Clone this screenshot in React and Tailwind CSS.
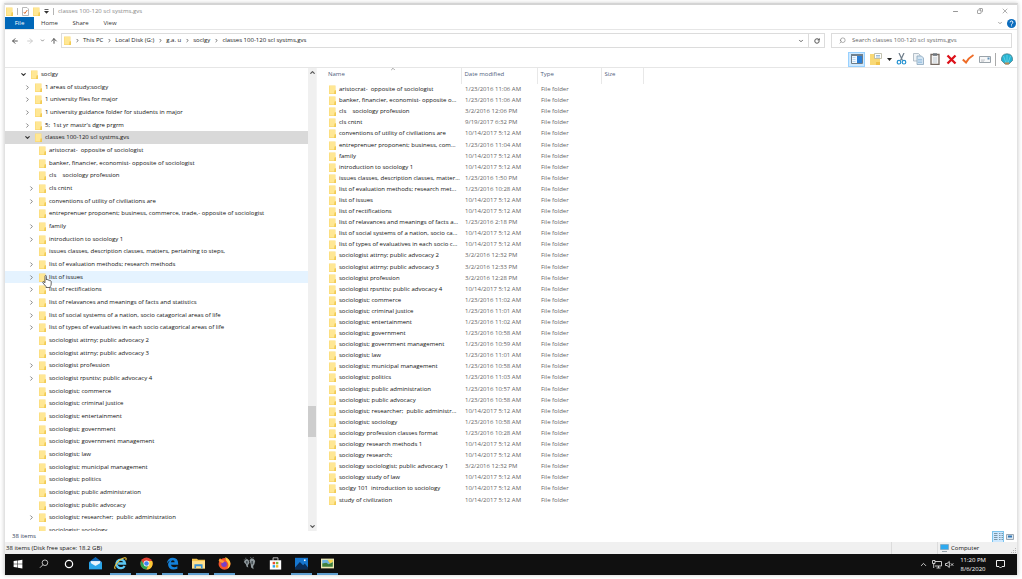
import { ArrowLeft, ArrowRight, ArrowUp, ChevronDown, ChevronRight, ChevronUp, Copy, Minus, RotateCcw, Search, X } from 'lucide-react'

const CRUMBS = ['This PC', 'Local Disk (G:)', 'g.a. u', 'soclgy', 'classes 100-120 scl systms,gvs']

// level, arrow (0 none, 1 closed, 2 open), name
const TREE = [
  [0, 2, 'soclgy'],
  [1, 1, '1 areas of study;soclgy'],
  [1, 1, '1 university files for major'],
  [1, 1, '1 university guidance folder for students in major'],
  [1, 1, '5;  1st yr mastr\'s dgre prgrm'],
  [1, 2, 'classes 100-120 scl systms,gvs'],
  [2, 0, 'aristocrat-  opposite of sociologist'],
  [2, 0, 'banker, financier, economist- opposite of sociologist'],
  [2, 0, 'cls    sociology profession'],
  [2, 1, 'cls cntnt'],
  [2, 1, 'conventions of utility of civiliations are'],
  [2, 0, 'entreprenuer proponent; business, commerce, trade,- opposite of sociologist'],
  [2, 1, 'family'],
  [2, 1, 'introduction to sociology 1'],
  [2, 0, 'issues classes, description classes, matters, pertaining to steps,'],
  [2, 1, 'list of evaluation methods; research methods'],
  [2, 1, 'list of issues'],
  [2, 1, 'list of rectifications'],
  [2, 1, 'list of relavances and meanings of facts and statistics'],
  [2, 1, 'list of social systems of a nation, socio catagorical areas of life'],
  [2, 1, 'list of types of evaluatives in each socio catagorical areas of life'],
  [2, 0, 'sociologist attrny; public advocacy 2'],
  [2, 0, 'sociologist attrny; public advocacy 3'],
  [2, 1, 'sociologist profession'],
  [2, 1, 'sociologist rpsnttv; public advocacy 4'],
  [2, 0, 'sociologist; commerce'],
  [2, 0, 'sociologist; criminal justice'],
  [2, 0, 'sociologist; entertainment'],
  [2, 0, 'sociologist; government'],
  [2, 0, 'sociologist; government management'],
  [2, 0, 'sociologist; law'],
  [2, 0, 'sociologist; municipal management'],
  [2, 0, 'sociologist; politics'],
  [2, 0, 'sociologist; public administration'],
  [2, 0, 'sociologist; public advocacy'],
  [2, 1, 'sociologist; researcher;  public administration'],
  [2, 0, 'sociologist; sociology'],
]

const FILES = [
  ['aristocrat-  opposite of sociologist', '1/23/2016 11:06 AM'],
  ['banker, financier, economist- opposite o...', '1/23/2016 11:06 AM'],
  ['cls    sociology profession', '3/2/2016 12:06 PM'],
  ['cls cntnt', '9/19/2017 6:32 PM'],
  ['conventions of utility of civiliations are', '10/14/2017 5:12 AM'],
  ['entreprenuer proponent; business, com...', '1/23/2016 11:04 AM'],
  ['family', '10/14/2017 5:12 AM'],
  ['introduction to sociology 1', '10/14/2017 5:12 AM'],
  ['issues classes, description classes, matter...', '1/23/2016 1:50 PM'],
  ['list of evaluation methods; research met...', '1/23/2016 10:28 AM'],
  ['list of issues', '10/14/2017 5:12 AM'],
  ['list of rectifications', '10/14/2017 5:12 AM'],
  ['list of relavances and meanings of facts a...', '1/23/2016 2:18 PM'],
  ['list of social systems of a nation, socio ca...', '10/14/2017 5:12 AM'],
  ['list of types of evaluatives in each socio c...', '10/14/2017 5:12 AM'],
  ['sociologist attrny; public advocacy 2', '3/2/2016 12:32 PM'],
  ['sociologist attrny; public advocacy 3', '3/2/2016 12:33 PM'],
  ['sociologist profession', '3/2/2016 12:28 PM'],
  ['sociologist rpsnttv; public advocacy 4', '10/14/2017 5:12 AM'],
  ['sociologist; commerce', '1/23/2016 11:02 AM'],
  ['sociologist; criminal justice', '1/23/2016 11:01 AM'],
  ['sociologist; entertainment', '1/23/2016 11:02 AM'],
  ['sociologist; government', '1/23/2016 10:58 AM'],
  ['sociologist; government management', '1/23/2016 10:59 AM'],
  ['sociologist; law', '1/23/2016 11:01 AM'],
  ['sociologist; municipal management', '1/23/2016 10:58 AM'],
  ['sociologist; politics', '1/23/2016 11:03 AM'],
  ['sociologist; public administration', '1/23/2016 10:57 AM'],
  ['sociologist; public advocacy', '1/23/2016 10:58 AM'],
  ['sociologist; researcher;  public administr...', '10/14/2017 5:12 AM'],
  ['sociologist; sociology', '1/23/2016 10:58 AM'],
  ['sociology profession classes format', '1/23/2016 10:28 AM'],
  ['sociology research methods 1', '10/14/2017 5:12 AM'],
  ['sociology research;', '10/14/2017 5:12 AM'],
  ['sociology sociologist; public advocacy 1', '3/2/2016 12:32 PM'],
  ['sociology study of law', '10/14/2017 5:12 AM'],
  ['soclgy 101  introduction to sociology', '10/14/2017 5:12 AM'],
  ['study of civilization', '10/14/2017 5:12 AM'],
]

function Folder() {
  return (
    <svg viewBox="0 0 7 9" className="h-[9px] w-[7px] shrink-0">
      <path d="M0 .5h6.500V5l.5.5V9H0z" fill="#fbdc79" />
      <path d="M.7 1h5.300v7H.7z" fill="#ffe794" />
      <path d="M5.500 5.500H7V9H5z" fill="#f2cb55" />
    </svg>
  )
}

function TitleBar() {
  return (
    <header className="flex h-3 items-center text-[#888]">
      <div className="flex flex-1 items-center gap-1 pl-px">
        <Folder />
        <span className="h-[7px] w-px bg-[#b5b5b5]" />
        <button aria-label="Properties">
          <svg viewBox="0 0 7 9" className="h-[9px] w-[7px]">
            <path d="M.5.5h4.500l1.500 1.500v6.500h-6z" fill="#fff" stroke="#a8a8a8" strokeWidth=".8" />
            <path d="m1.800 5 1 1.500L5.300 3" fill="none" stroke="#dd7233" />
          </svg>
        </button>
        <button aria-label="New folder">
          <Folder />
        </button>
        <button aria-label="Customize">
          <svg viewBox="0 0 5 5" className="h-[5px] w-[5px]">
            <path d="M.5 0h4v.8h-4zM0 2h5L2.500 4.800z" fill="#333" />
          </svg>
        </button>
        <span className="h-[7px] w-px bg-[#b5b5b5]" />
        <h1>classes 100-120 scl systms,gvs</h1>
      </div>
      <div className="flex items-center gap-[18px] pr-2">
        <button aria-label="Minimize"><Minus size={7} strokeWidth={3} /></button>
        <button aria-label="Restore"><Copy size={6} strokeWidth={3} className="-scale-x-100" /></button>
        <button aria-label="Close"><X size={8} strokeWidth={2} /></button>
      </div>
    </header>
  )
}

function Tabs() {
  return (
    <nav className="flex h-[13px] items-center border-b border-[#e6e6e6] text-[#333]">
      <button className="h-3 w-[29px] bg-[#0067b8] text-white">File</button>
      <button className="w-[31px]">Home</button>
      <button className="w-[31px]">Share</button>
      <button className="w-7">View</button>
      <div className="ml-auto flex items-center gap-1 pr-px">
        <button aria-label="Expand ribbon"><ChevronDown size={6} strokeWidth={3} className="text-[#888]" /></button>
        <button aria-label="Help">
          <svg viewBox="0 0 16 16" className="h-[9px] w-[9px]">
            <circle cx="8" cy="8" r="8" fill="#0b6cbd" />
            <path d="M5.500 6a2.500 2.500 0 1 1 3.600 2.200C8.200 8.700 8 9 8 10M8 11.500v1.500" fill="none" stroke="#fff" strokeWidth="1.700" />
          </svg>
        </button>
      </div>
    </nav>
  )
}

function AddressRow() {
  return (
    <div className="flex h-[21px] items-center px-[5px]">
      <div className="flex w-[51px] items-center pl-px text-[#555]">
        <button aria-label="Back" className="w-[15px]"><ArrowLeft size={8} strokeWidth={3} /></button>
        <button aria-label="Forward" className="w-[14px]"><ArrowRight size={8} strokeWidth={3} className="text-[#ccc]" /></button>
        <button aria-label="Recent" className="w-[10px]"><ChevronDown size={5} strokeWidth={3} /></button>
        <button aria-label="Up"><ArrowUp size={8} strokeWidth={3} /></button>
      </div>
      <div className="flex h-[15px] flex-1 items-center border border-[#dcdcdc] pl-0.5">
        <Folder />
        <ol className="flex flex-1 items-center text-[#222]">
          {CRUMBS.map((name) => (
            <li key={name} className="flex items-center">
              <ChevronRight size={5} strokeWidth={4} className="mr-[3px] ml-1 text-[#555]" />
              <a href="#">{name}</a>
            </li>
          ))}
        </ol>
        <button aria-label="Previous locations" className="flex w-[15px] justify-center">
          <ChevronDown size={6} strokeWidth={4} className="text-[#666]" />
        </button>
        <button aria-label="Refresh" className="flex h-full w-4 items-center justify-center border-l border-[#dcdcdc]">
          <RotateCcw size={6} strokeWidth={4} className="-scale-x-100 text-[#555]" />
        </button>
      </div>
      <label className="ml-[6px] flex h-[15px] w-[181px] items-center border border-[#dcdcdc] pl-[7px]">
        <Search size={7} className="-scale-x-100 text-[#777]" />
        <input
          aria-label="Search"
          placeholder="Search classes 100-120 scl systms,gvs"
          className="ml-[6px] min-w-0 flex-1 outline-none placeholder:text-[#666]"
        />
      </label>
    </div>
  )
}

function Toolbar() {
  return (
    <div className="flex h-[17px] items-center justify-end border-b border-[#e6e6e6]">
      <button aria-label="Navigation pane" className="flex h-[15px] w-[17px] items-center justify-center border border-[#99d1ff] bg-[#cce8ff]">
        <svg viewBox="0 0 12 10" className="h-2.5 w-3">
          <path d="M.5.5h11v9H.5z" fill="#f2f8fd" stroke="#6d7c88" />
          <path d="M0 0h12v2H0z" fill="#71818e" />
          <path d="M6 2h5v7H6z" fill="#2b7fd6" />
          <path d="M1.500 3.500h3M1.500 5.500h3M1.500 7.500h3" stroke="#9cc4e8" strokeWidth=".7" />
        </svg>
      </button>
      <button aria-label="Layout" className="ml-[5px] flex items-center gap-[5px]">
        <svg viewBox="0 0 12 12" className="h-3 w-3">
          <path d="M0 1h5v2h5v9H0z" fill="#f9d976" />
          <path d="M4.500.5h7v5h-7z" fill="#fff" stroke="#b3b39c" strokeWidth=".8" />
          <path d="M6 2.500h4M6 4h4" stroke="#6c9dcc" strokeWidth=".7" />
          <path d="M6 9h4v3H6z" fill="#f0c24a" />
        </svg>
        <svg viewBox="0 0 5 3" className="h-[3px] w-[5px]"><path d="M0 0h5L2.500 3z" fill="#222" /></svg>
      </button>
      <button aria-label="Cut" className="ml-1">
        <svg viewBox="0 0 11 12" className="h-3 w-[11px]">
          <path d="m3 0 3.500 7.500M8 0 4.500 7.500" stroke="#6e7d8a" strokeWidth="1.200" />
          <circle cx="3" cy="9.200" r="1.800" fill="none" stroke="#2492d1" strokeWidth="1.200" />
          <circle cx="8" cy="9.200" r="1.800" fill="none" stroke="#2492d1" strokeWidth="1.200" />
        </svg>
      </button>
      <button aria-label="Copy" className="ml-[6px]">
        <svg viewBox="0 0 11 12" className="h-3 w-[11px]">
          <path d="M.5.5h5l1.500 1.500v6H.5z" fill="#eef2f5" stroke="#a4b1bc" strokeWidth=".8" />
          <path d="M4 3h4.500l2 2v6.500H4z" fill="#d3e4f2" stroke="#89a6bd" strokeWidth=".8" />
          <path d="M5 6.500h4M5 8h4M5 9.500h4" stroke="#7fb0d6" strokeWidth=".6" />
        </svg>
      </button>
      <button aria-label="Paste" className="ml-[6px]">
        <svg viewBox="0 0 10 12" className="h-3 w-2.5">
          <path d="M1 1.500h8v10H1z" fill="#f4f4f4" stroke="#756a62" strokeWidth="1.300" />
          <path d="M3 .3h4v2.500H3z" fill="#6f7880" />
          <path d="M3 5h4M3 7h4M3 9h4" stroke="#aebcc8" strokeWidth=".7" />
        </svg>
      </button>
      <button aria-label="Delete" className="ml-[6px]">
        <svg viewBox="0 0 11 11" className="h-[11px] w-[11px]">
          <path d="M1.500 1.500Q4 4 9.500 9.500M9.500 1.500 1.500 9.500" stroke="#dc1019" strokeWidth="2.300" />
        </svg>
      </button>
      <button aria-label="Rename" className="ml-[5px]">
        <svg viewBox="0 0 12 10" className="h-2.5 w-3" fill="none">
          <path d="M.8 5.500 4 8.500Q7 3.500 11.500 1" stroke="#ee6c27" strokeWidth="2" />
        </svg>
      </button>
      <button aria-label="E-mail" className="ml-[5px]">
        <svg viewBox="0 0 12 7" className="h-[7px] w-3">
          <path d="M.5.5h11v6H.5z" fill="#f7f8f9" stroke="#9aa3aa" />
          <path d="M2 4h4M2 5.200h3" stroke="#a7adb2" strokeWidth=".6" />
          <path d="M8.500 1.500h2v2h-2z" fill="#5f91b8" />
        </svg>
      </button>
      <span className="mr-[5px] ml-1 h-[13px] w-px bg-[#aaa]" />
      <button aria-label="Classic shell" className="mr-1">
        <svg viewBox="0 0 12 12" className="h-3 w-3">
          <path d="M4 11 .5 7.500Q0 1 6 .8 12 1 11.500 7.500L8 11z" fill="#25b4d2" stroke="#527f8a" strokeWidth=".8" />
          <path d="M6 10V2M5 10 2.500 3M7 10l2.500-7" stroke="#82dff0" strokeWidth=".6" />
          <path d="M3.500 9.500h5l-1 2h-3z" fill="#b98a52" />
        </svg>
      </button>
    </div>
  )
}

function HandCursor() {
  return (
    <svg viewBox="0 0 10 13" className="absolute top-1 left-[37px] z-10 h-[13px] w-2.5">
      <path
        d="M3 1.300Q3 .5 3.700.5t.7.8V5q.2-.6.900-.5.700 0 .8.800.3-.4.900-.3.600.100.700.700.400-.2.900 0 .6.200.6.900V9q0 1.500-.9 2.500v1H4v-1L1 8Q.300 6.900 1 6.600q.7-.200 2 1.200z"
        fill="#fff" stroke="#444" strokeWidth=".8"
      />
    </svg>
  )
}

const INDENT = ['pl-[14px]', 'pl-[18px]', 'pl-[22px]']

function rowColor(i) {
  if (i === 5) return 'bg-[#d9d9d9]'
  if (i === 16) return 'bg-[#e5f3ff]'
  return ''
}

function Tree() {
  return (
    <div className="flex w-[311px] shrink-0">
      <div className="h-full flex-1 overflow-hidden">
        {/* 37 rows share the height, the last one is cut by the pane */}
        <ul className="grid h-[469px] auto-rows-fr text-[#111]">
          {TREE.map(([level, arrow, name], i) => (
            <li key={name} className={`relative flex min-h-0 items-center whitespace-pre ${INDENT[level]} ${rowColor(i)}`}>
              <span className="flex w-3 shrink-0 pl-px text-[#777]">
                {arrow === 1 && <button aria-label="Expand"><ChevronRight size={7} strokeWidth={3} /></button>}
                {arrow === 2 && <button aria-label="Collapse" className="text-[#333]"><ChevronDown size={7} strokeWidth={4} /></button>}
              </span>
              <Folder />
              <a href="#" className="ml-[3px]">{name}</a>
              {i === 16 && <HandCursor />}
            </li>
          ))}
        </ul>
      </div>
      <div className="flex w-2 flex-col items-center bg-[#f0f0f0] text-[#555]">
        <ChevronUp size={7} strokeWidth={4} className="mt-px" />
        <div className="flex-[328]" />
        <div className="w-full flex-[31] bg-[#cdcdcd]" />
        <div className="flex-[85]" />
        <ChevronDown size={7} strokeWidth={4} className="mb-px" />
      </div>
    </div>
  )
}

function FileList() {
  return (
    <div className="min-w-0 flex-1 overflow-hidden border-l border-[#f4f4f4] pl-2">
      <table className="h-[438px] w-full table-fixed border-collapse text-left whitespace-pre">
        <thead className="text-[#4f607c]">
          <tr className="h-4">
            <th className="relative w-[136px] border-r border-[#e8e8e8] p-0 pt-0.5 pl-[3px] align-top font-normal">
              Name
              <ChevronUp size={6} strokeWidth={3} className="absolute -top-0.5 left-[65px] text-[#888]" />
            </th>
            <th className="w-[76px] border-r border-[#e8e8e8] p-0 pt-0.5 pl-[3px] align-top font-normal">Date modified</th>
            <th className="w-16 border-r border-[#e8e8e8] p-0 pt-0.5 pl-[3px] align-top font-normal">Type</th>
            <th className="w-[42px] border-r border-[#e8e8e8] p-0 pt-0.5 pl-[3px] align-top font-normal">Size</th>
            <th className="p-0" />
          </tr>
        </thead>
        <tbody className="text-[#666]">
          {FILES.map(([name, date]) => (
            <tr key={name}>
              <td className="p-0 pl-1">
                <a href="#" className="flex items-center gap-[3px] text-[#111]">
                  <Folder />
                  {name}
                </a>
              </td>
              <td className="p-0 pl-1">{date}</td>
              <td className="p-0 pl-1">File folder</td>
              <td className="p-0" />
              <td className="p-0" />
            </tr>
          ))}
        </tbody>
      </table>
    </div>
  )
}

function StatusBars() {
  return (
    <>
      <div className="flex h-[11px] items-center justify-between pr-[3px] pl-[7px] text-[#2f4059]">
        <span>38 items</span>
        <span className="flex items-center gap-0.5">
          <button aria-label="Details view" className="flex h-3 w-3 items-center justify-center border border-[#7cc4ec] bg-[#cce8ff]">
            <svg viewBox="0 0 9 7" className="h-[7px] w-[9px]">
              <path d="M0 .5h3.500M5 .5h1.500M7.500.5H9M0 2.500h3.500M5 2.500h1.500M7.500 2.500H9M0 4.500h3.500M5 4.500h1.500M7.500 4.500H9M0 6.500h3.500M5 6.500h1.500M7.500 6.500H9" stroke="#7b97a8" />
            </svg>
          </button>
          <button aria-label="Large icons">
            <svg viewBox="0 0 8 6" className="h-1.5 w-2">
              <path d="M.5.5h7v5h-7z" fill="#dce7f0" stroke="#9ba7b2" />
              <path d="M2 1.500h4v2H2z" fill="#3276b5" />
            </svg>
          </button>
        </span>
      </div>
      <div className="flex h-3 items-center bg-[#f0f0f0] text-[#111]">
        <span className="flex-1 pl-px">38 items (Disk free space: 18.2 GB)</span>
        <span className="h-full w-[46px] border-l border-[#dcdcdc]" />
        <span className="flex h-full w-[80px] items-center gap-0.5 border-l border-[#dcdcdc] pl-0.5">
          <svg viewBox="0 0 9 8" className="h-2 w-[9px]">
            <path d="M.5.5h8v5h-8z" fill="#2eaaf0" stroke="#7c9cb0" strokeWidth=".6" />
            <path d="M2 7h5v.8H2z" fill="#7f8e98" />
          </svg>
          Computer
          <svg viewBox="0 0 6 6" className="mt-auto ml-auto h-1.5 w-1.5" fill="#b5b5b5">
            <path d="M4 0h1v1H4zM2 2h1v1H2zM4 2h1v1H4zM0 4h1v1H0zM2 4h1v1H2zM4 4h1v1H4z" />
          </svg>
        </span>
      </div>
    </>
  )
}

const APPS = [
  ['Start', false, <path d="m1 3.200 6-.9v5.300H1zM7.800 2.200 15 1v6.600H7.800zM1 8.400h6v5.300l-6-.9zM7.800 8.400H15V15l-7.200-1.200z" fill="#fff" />],
  ['Search', false, <g fill="none" stroke="#e5e5e5" strokeWidth="1.300"><circle cx="9.500" cy="6" r="4.500" /><path d="m6.500 9-5 5" /></g>],
  ['Cortana', false, <circle cx="8" cy="8" r="5.800" fill="none" stroke="#fff" strokeWidth="2" />],
  ['Mail', false, <g><path d="M0 6 8 0l8 6v9H0z" fill="#0f66b4" /><path d="M2 5h12v6H2z" fill="#e8f4fc" /><path d="m0 6 8 5 8-5v9H0z" fill="#2aa5e8" /></g>],
  ['Internet Explorer', true, <g fill="none"><path d="M13 11a5.300 5.300 0 1 1 .6-3H5" stroke="#5cc8f5" strokeWidth="2.800" /><path d="M2 14.500C-2 14 5 3 13 1q3-.5 1.500 3" stroke="#f5c93a" strokeWidth="1.300" /></g>],
  ['Chrome', true, <g><circle cx="8" cy="8" r="7.500" fill="#e34133" /><path d="M1.500 4.300A7.500 7.500 0 0 0 8 15.500L11 9 8 8 5 9z" fill="#2fa350" /><path d="M15 5a7.500 7.500 0 0 1-7 10.500L11.500 8 9 5z" fill="#fcc934" /><circle cx="8" cy="8" r="3.600" fill="#fff" /><circle cx="8" cy="8" r="2.800" fill="#4184ee" /></g>],
  ['Edge', true, <path d="M1 8Q2 1 8.500 1 15 1 15 8.500v1H6q.5 3 4 3 2 0 4-1.200v3.200q-2 1-5 1-6.500-.5-6.500-7Q3 5.500 6 4 2.500 4.800 1 8zm5-1.500h4.700Q10.500 4 8.500 4 6.300 4 6 6.500z" fill="#1480d8" />],
  ['File Explorer', true, <g><path d="M0 2h6l1.500 1.500H16V14H0z" fill="#f3c34b" /><path d="M0 5h16v9H0z" fill="#ffe08c" /><path d="M3 9h10v5h-2v-2.500H5V14H3z" fill="#3a92d6" /></g>],
  ['Firefox', true, <g><circle cx="8" cy="8.500" r="7.300" fill="#f5542c" /><path d="M9 0q6 3 6.300 8-.3 5-4 6.500Q14 10 12 7 9 5 9 0z" fill="#ffc83a" /><circle cx="7.500" cy="8.800" r="3.400" fill="#7740c8" /><path d="M.8 5Q1 3 2.500 1.500 4 4 8 5L6 7.500Q3 7 .8 5z" fill="#ff9a34" /></g>],
  ['Footprints', false, <g fill="#8e979b"><path d="M1 6 3 3l2-.5L7 4l1 3-2 3 .5 3-2-1-1-3zM3 1h1v1H3zM1 3h1v1H1z" /><path d="m8 4 2-2.500 3 .5 2 3-1 4-1.500 2 .5 4-3-2-.5-4zM9 0h1v1H9zM12 0h1v1h-1z" /><path d="M4 5h1.500v3H4zM10.500 5H12v4h-1.500z" fill="#333d42" /></g>],
  ['Store', false, <g><path d="M5 4.500V1h6v3.500" fill="none" stroke="#ddd" /><path d="M1 4h14v11.500H1z" fill="#fff" /><path d="M4.500 6H7.500v3h-3z" fill="#e94f2e" /><path d="M8.500 6h3v3h-3z" fill="#7db93a" /><path d="M4.500 10h3v3h-3z" fill="#2aa4e5" /><path d="M8.500 10h3v3h-3z" fill="#f5b921" /></g>],
  ['Photos', true, <g><path d="M0 1h16v14H0z" fill="#1677d0" /><path d="m0 13 6-7 4 4 2-2 4 5v2H0z" fill="#0a2d58" /><path d="M11 3h2v2h-2z" fill="#fff" /></g>],
  ['Paint', true, <g><path d="M0 2h16v12H0z" fill="#efe9b4" /><path d="M1.500 3.500h13v5h-13z" fill="#6db4dd" /><path d="m1.500 8 5-1 3 2 5-3v6h-13z" fill="#3f7f3d" /><path d="M8 3.500h6.500V6L11 8z" fill="#f6d447" /></g>],
]

const SMALL = ['Start', 'Search', 'Cortana']

function Taskbar() {
  return (
    <footer className="flex h-[21px] items-stretch bg-[#101010] text-white">
      <div className="flex w-[335px]">
        {APPS.map(([name, open, art]) => (
          <button key={name} aria-label={name} className="flex flex-1 flex-col items-center justify-end">
            <svg viewBox="0 0 16 16" className={SMALL.includes(name) ? 'mb-1 h-2.5 w-2.5' : 'mb-[3px] h-[13px] w-[13px]'}>
              {art}
            </svg>
            <span className={`h-0.5 w-[21px] ${open ? 'bg-[#5f9fcf]' : ''}`} />
          </button>
        ))}
      </div>
      <div className="ml-auto flex items-center pr-3">
        <button aria-label="Hidden icons"><ChevronUp size={9} /></button>
        <svg viewBox="0 0 10 9" className="ml-1 h-[9px] w-2.5" fill="none" stroke="#ddd" strokeWidth=".9">
          <path d="M3 1.500h6.500v4.500H3M6.500 6v2M4.500 8h4M.5.5h2.500v3H.5zM1.700 3.500V8" />
        </svg>
        <svg viewBox="0 0 9 9" className="ml-[3px] h-[9px] w-[9px]" fill="none" stroke="#ddd" strokeWidth=".9">
          <path d="M.5 3.500H2L4.300 1.500v6L2 5.500H.5zM5.800 3.300l2.500 2.500M8.300 3.300 5.800 5.800" />
        </svg>
        <div className="ml-[6px] text-center">
          <p>11:20 PM</p>
          <p>8/6/2020</p>
        </div>
        <button aria-label="Notifications" className="ml-[10px]">
          <svg viewBox="0 0 9 9" className="h-[9px] w-[9px]" fill="none" stroke="#eee">
            <path d="M.5.5h8v6H6L4.500 8 3 6.500H.5z" />
          </svg>
        </button>
      </div>
    </footer>
  )
}

export default function App() {
  return (
    <div className="flex h-screen flex-col bg-white px-1 pt-[3px] pb-1 font-['Open_Sans',sans-serif] text-[6px] leading-[9px]">
      <div className="flex min-h-0 flex-1 flex-col border-x border-t-2 border-x-[#e2e2e2] border-t-[#d4d4d4] shadow-[0_0_4px_#ccc]">
        <TitleBar />
        <Tabs />
        <AddressRow />
        <Toolbar />
        <main className="flex min-h-0 flex-1">
          <Tree />
          <FileList />
        </main>
        <StatusBars />
        <Taskbar />
      </div>
    </div>
  )
}
